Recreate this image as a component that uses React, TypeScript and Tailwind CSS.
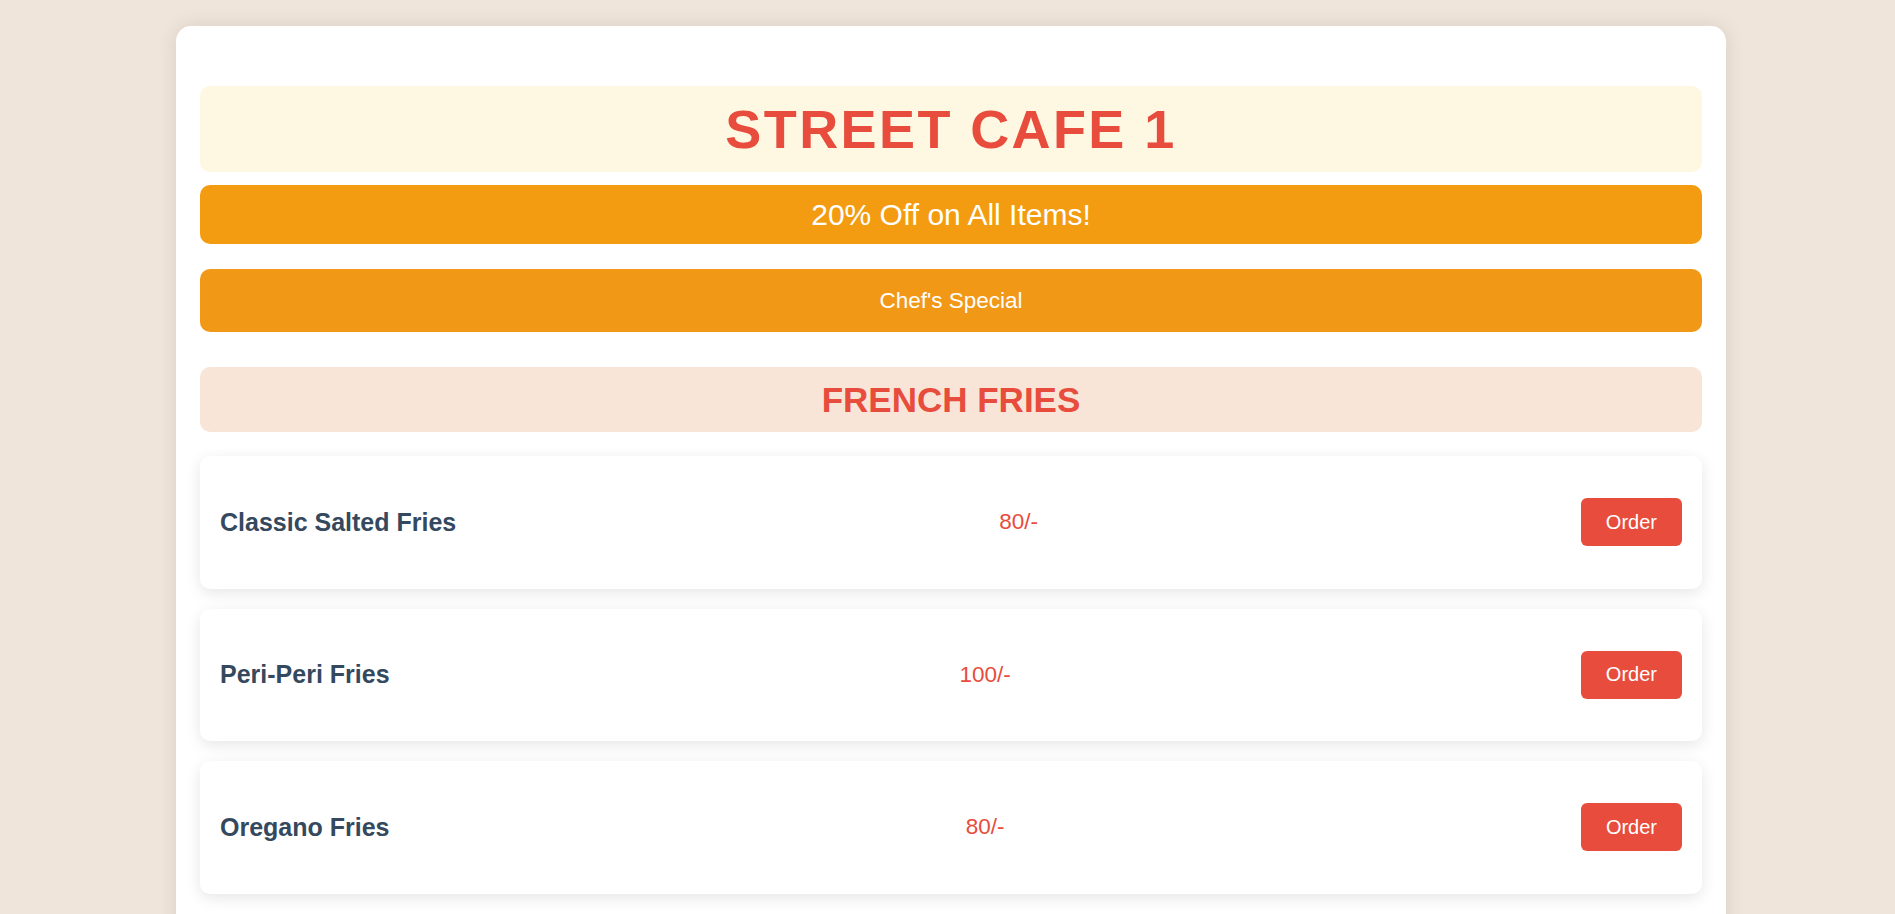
const items = [
  { name: 'Classic Salted Fries', price: '80/-' },
  { name: 'Peri-Peri Fries', price: '100/-' },
  { name: 'Oregano Fries', price: '80/-' },
]

function MenuItem({ name, price }: { name: string; price: string }) {
  return (
    <div className="flex h-[132.5px] items-center justify-between rounded-[10px] bg-white px-5 shadow-[0_4px_15px_rgba(0,0,0,0.1)]">
      <h3 className="text-[25px] font-bold leading-[29px] text-[#34495e]">{name}</h3>
      <span className="text-[22.5px] leading-[26px] text-[#e74c3c]">{price}</span>
      <button className="rounded-[6px] bg-[#e74c3c] px-[25px] py-[12.5px] text-[20px] leading-[23px] text-white">
        Order
      </button>
    </div>
  )
}

export default function App() {
  return (
    <div className="min-h-screen bg-[#f0e5da] pt-[26px] font-['Liberation_Sans',Arial,sans-serif]">
      <div className="ml-[176px] w-[1550px] rounded-[15px] bg-white px-6 pb-16 pt-[60px] shadow-[0_0_20px_rgba(0,0,0,0.1)]">
        <h1 className="rounded-[10px] bg-[#fef7e1] py-3 text-center text-[54px] font-bold leading-[62px] tracking-[2.4px] text-[#e74c3c]">
          STREET CAFE 1
        </h1>

        <div className="mt-[13px] rounded-[10px] bg-[#f39c12] py-3 text-center text-[30px] leading-[35px] text-white">
          20% Off on All Items!
        </div>

        <div className="mt-[25px] flex h-[63px] items-center justify-center rounded-[10px] bg-[#f19816] text-[22.5px] text-white">
          Chef's Special
        </div>

        <h2 className="mt-[35px] rounded-[10px] bg-[#f8e5d8] py-[12.5px] text-center text-[35px] font-bold leading-[40px] text-[#e74c3c]">
          FRENCH FRIES
        </h2>

        <div className="mt-6 flex flex-col gap-5">
          {items.map((item) => (
            <MenuItem key={item.name} name={item.name} price={item.price} />
          ))}
        </div>
      </div>
    </div>
  )
}
